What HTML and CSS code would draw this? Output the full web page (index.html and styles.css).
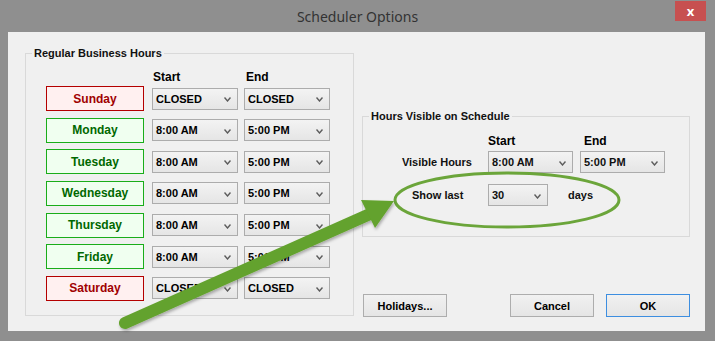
FILE: index.html
```html
<!DOCTYPE html>
<html lang="en">
<head>
    <meta charset="UTF-8">
    <meta name="viewport" content="width=device-width, initial-scale=1.0">
    <title>Scheduler Options</title>
    <link rel="stylesheet" href="styles.css">
</head>
<body>
    <div class="window">
        <div class="titlebar">
            <span class="title">Scheduler Options</span>
            <button class="close">x</button>
        </div>
        <div class="client">
            <!-- left group: one row per weekday -->
            <div class="group business">
                <span class="group-title">Regular Business Hours</span>
                <div class="col-heads">
                    <span></span>
                    <span class="head-start">Start</span>
                    <span class="head-end">End</span>
                </div>
                <div class="hours">
                    <button class="day closed">Sunday</button>
                    <div class="combo">CLOSED<svg viewBox="0 0 7 5"><polyline points="0.5,0.5 3.5,4 6.5,0.5"></polyline></svg></div>
                    <div class="combo">CLOSED<svg viewBox="0 0 7 5"><polyline points="0.5,0.5 3.5,4 6.5,0.5"></polyline></svg></div>

                    <button class="day open">Monday</button>
                    <div class="combo">8:00 AM<svg viewBox="0 0 7 5"><polyline points="0.5,0.5 3.5,4 6.5,0.5"></polyline></svg></div>
                    <div class="combo">5:00 PM<svg viewBox="0 0 7 5"><polyline points="0.5,0.5 3.5,4 6.5,0.5"></polyline></svg></div>

                    <button class="day open">Tuesday</button>
                    <div class="combo">8:00 AM<svg viewBox="0 0 7 5"><polyline points="0.5,0.5 3.5,4 6.5,0.5"></polyline></svg></div>
                    <div class="combo">5:00 PM<svg viewBox="0 0 7 5"><polyline points="0.5,0.5 3.5,4 6.5,0.5"></polyline></svg></div>

                    <button class="day open">Wednesday</button>
                    <div class="combo">8:00 AM<svg viewBox="0 0 7 5"><polyline points="0.5,0.5 3.5,4 6.5,0.5"></polyline></svg></div>
                    <div class="combo">5:00 PM<svg viewBox="0 0 7 5"><polyline points="0.5,0.5 3.5,4 6.5,0.5"></polyline></svg></div>

                    <button class="day open">Thursday</button>
                    <div class="combo">8:00 AM<svg viewBox="0 0 7 5"><polyline points="0.5,0.5 3.5,4 6.5,0.5"></polyline></svg></div>
                    <div class="combo">5:00 PM<svg viewBox="0 0 7 5"><polyline points="0.5,0.5 3.5,4 6.5,0.5"></polyline></svg></div>

                    <button class="day open">Friday</button>
                    <div class="combo">8:00 AM<svg viewBox="0 0 7 5"><polyline points="0.5,0.5 3.5,4 6.5,0.5"></polyline></svg></div>
                    <div class="combo">5:00 PM<svg viewBox="0 0 7 5"><polyline points="0.5,0.5 3.5,4 6.5,0.5"></polyline></svg></div>

                    <button class="day closed">Saturday</button>
                    <div class="combo">CLOSED<svg viewBox="0 0 7 5"><polyline points="0.5,0.5 3.5,4 6.5,0.5"></polyline></svg></div>
                    <div class="combo">CLOSED<svg viewBox="0 0 7 5"><polyline points="0.5,0.5 3.5,4 6.5,0.5"></polyline></svg></div>
                </div>
            </div>

            <div class="side">
                <div class="group visible">
                    <span class="group-title">Hours Visible on Schedule</span>
                    <div class="vis-heads">
                        <span></span>
                        <span>Start</span>
                        <span>End</span>
                    </div>
                    <div class="vis-row">
                        <span class="vis-label">Visible Hours</span>
                        <div class="combo small first">8:00 AM<svg viewBox="0 0 7 5"><polyline points="0.5,0.5 3.5,4 6.5,0.5"></polyline></svg></div>
                        <div class="combo small second">5:00 PM<svg viewBox="0 0 7 5"><polyline points="0.5,0.5 3.5,4 6.5,0.5"></polyline></svg></div>
                    </div>
                    <div class="vis-row last-row">
                        <span class="last-label">Show last</span>
                        <div class="combo days-combo">30<svg viewBox="0 0 7 5"><polyline points="0.5,0.5 3.5,4 6.5,0.5"></polyline></svg></div>
                        <span class="days-label">days</span>
                    </div>
                </div>
                <div class="actions">
                    <button class="btn holidays">Holidays...</button>
                    <button class="btn cancel">Cancel</button>
                    <button class="btn ok">OK</button>
                </div>
            </div>
        </div>
    </div>

    <!-- green callout drawn over the dialog -->
    <svg class="annotation" viewBox="0 0 715 341">
        <defs>
            <filter id="shade" x="-10%" y="-10%" width="120%" height="130%">
                <feDropShadow dx="1" dy="2" stdDeviation="1.5" flood-color="#000" flood-opacity="0.3"></feDropShadow>
            </filter>
        </defs>
        <ellipse cx="507" cy="200" rx="112" ry="27" fill="none" stroke="#6ba53a" stroke-width="3"></ellipse>
        <g filter="url(#shade)" fill="#63a22d">
            <line x1="125" y1="323" x2="370" y2="214" stroke="#63a22d" stroke-width="12" stroke-linecap="round"></line>
            <polygon points="394,201 361,200 375,228"></polygon>
        </g>
    </svg>
</body>
</html>
```

FILE: styles.css
```css
body {
    margin: 0;
    width: 715px;
    height: 341px;
    overflow: hidden;
    position: relative;
    background: #8f8f8f;
    font-family: 'Liberation Sans', Arial, sans-serif;
    color: #000;
}

.titlebar {
    height: 32px;
    display: grid;
    grid-template-columns: 1fr auto 1fr;
}

.title {
    grid-column: 2;
    font-family: 'Noto Sans', sans-serif;
    font-size: 14px;
    line-height: 33px;
    color: #333;
}

.close {
    grid-column: 3;
    justify-self: end;
    align-self: start;
    width: 31px;
    height: 20px;
    margin: 1px 9px 0 0;
    padding: 0;
    border: 0;
    background: #c75050;
    color: #fff;
    font-family: 'Noto Sans', sans-serif;
    font-size: 13px;
    font-weight: bold;
    line-height: 18px;
}

.client {
    height: 299px;
    margin: 0 10px 0 8px;
    padding: 21px 0 0 17px;
    box-sizing: border-box;
    background: #f0f0f0;
    display: flex;
}

.group {
    border: 1px solid #d9d9d9;
    box-sizing: border-box;
}

.group-title {
    display: block;
    width: fit-content;
    margin: -7px 0 0 6px;
    padding: 0 2px;
    background: #f0f0f0;
    font-size: 11px;
    font-weight: bold;
    line-height: 13px;
    color: #111;
}

/* left group */
.business {
    width: 329px;
    height: 263px;
}

.col-heads {
    display: grid;
    grid-template-columns: 106px 92px 86px;
    margin: 10px 0 2px 20px;
    font-size: 12px;
    font-weight: bold;
    line-height: 14px;
}

.head-start {
    padding-left: 1px;
}

.head-end {
    padding-left: 2px;
}

.hours {
    display: grid;
    grid-template-columns: 106px 92px 86px;
    row-gap: 6.67px;
    align-items: center;
    margin-left: 20px;
}

.day {
    width: 98px;
    height: 25px;
    padding: 0;
    border: 1px solid;
    font-family: 'Liberation Sans', Arial, sans-serif;
    font-size: 12px;
    font-weight: bold;
}

.day.open {
    color: #006800;
    border-color: #1aad1a;
    background: #f0fff0;
}

.day.closed {
    color: #a00000;
    border-color: #b40000;
    background: #fff0f0;
}

.combo {
    width: 86px;
    height: 22px;
    box-sizing: border-box;
    padding: 0 6px 0 3px;
    border: 1px solid #acacac;
    background: linear-gradient(#f3f3f3, #e5e5e5);
    display: flex;
    align-items: center;
    justify-content: space-between;
    font-size: 11px;
    font-weight: bold;
}

.combo svg {
    width: 7px;
    height: 5px;
    margin-top: 2px;
}

.combo polyline {
    fill: none;
    stroke: #5c5c5c;
    stroke-width: 1.4;
}

/* right column */
.side {
    width: 328px;
    margin: 63px 0 0 8px;
    display: flex;
    flex-direction: column;
}

.visible {
    height: 121px;
}

.vis-heads {
    display: grid;
    grid-template-columns: 125px 96px auto;
    margin-top: 11px;
    font-size: 12px;
    font-weight: bold;
    line-height: 14px;
}

.vis-row {
    display: flex;
    align-items: center;
    margin-top: 3px;
    font-size: 11px;
    font-weight: bold;
    color: #111;
}

.vis-label {
    width: 109px;
    text-align: right;
}

.combo.small {
    width: 85px;
}

.combo.first {
    margin-left: 16px;
}

.combo.second {
    margin-left: 7px;
}

.last-row {
    margin-top: 11px;
}

.last-label {
    width: 76px;
    margin-left: 49px;
}

.combo.days-combo {
    width: 60px;
}

.days-label {
    margin-left: 20px;
}

.actions {
    display: flex;
    margin-top: 57px;
}

.btn {
    width: 84px;
    height: 23px;
    padding: 0;
    border: 1px solid #adadad;
    background: linear-gradient(#f1f1f1, #e5e5e5);
    font-family: 'Liberation Sans', Arial, sans-serif;
    font-size: 11px;
    font-weight: bold;
    color: #000;
}

.holidays {
    margin-left: 1px;
}

.cancel {
    margin-left: auto;
}

.ok {
    margin-left: 12px;
    border-color: #3d8ee0;
}

.annotation {
    position: absolute;
    top: 0;
    left: 0;
    width: 715px;
    height: 341px;
    pointer-events: none;
}
```
